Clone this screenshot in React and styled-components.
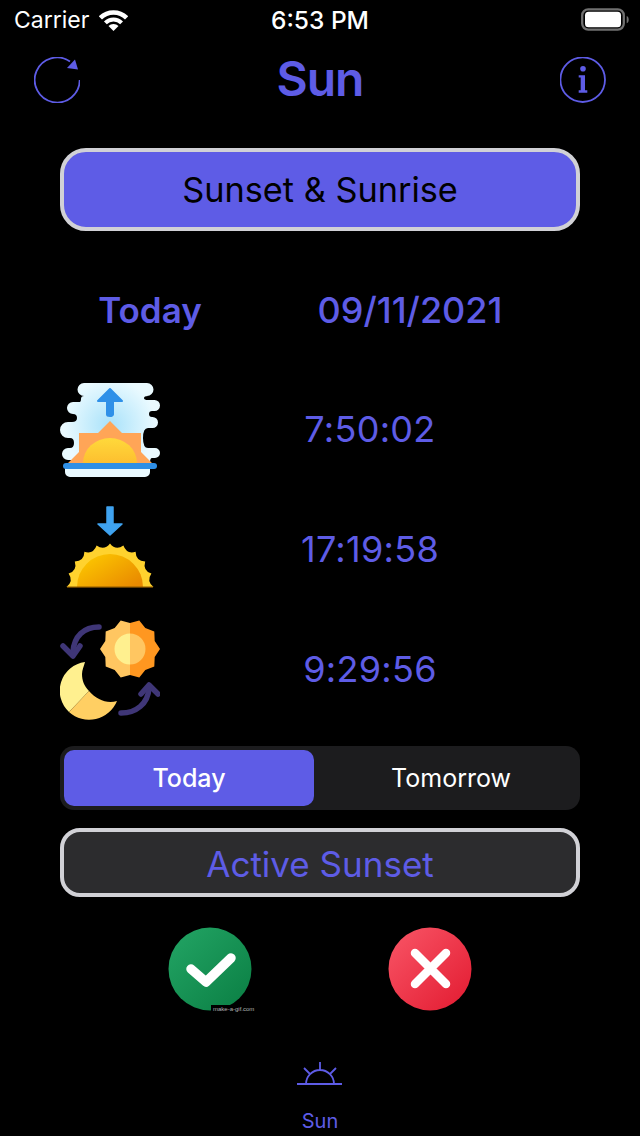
import React from "react";
import styled, { createGlobalStyle } from "styled-components";

const Global = createGlobalStyle`
  html, body { margin: 0; padding: 0; background: #000; }
  body { font-family: Inter, "Noto Sans", "Liberation Sans", sans-serif; }
`;
const ACCENT = "#5e5ce6";

const Page = styled.div`
  width: 640px; height: 1136px; background: #000; display: flex; flex-direction: column; overflow: hidden;
`;
const StatusBar = styled.div`
  height: 40px; display: grid; grid-template-columns: 1fr auto 1fr; align-items: center; padding: 0 14px; color: #fff; box-sizing: border-box;
`;
const StatusLeft = styled.div`display: flex; align-items: center; gap: 10px; font-size: 23px; font-weight: 400;`;
const StatusTime = styled.div`font-size: 24.5px; font-weight: 500;`;
const StatusRight = styled.div`display: flex; justify-content: flex-end; margin-right: -3px;`;
const StatusIcon = styled.svg`display: block;`;
const NavBar = styled.div`
  height: 80px; display: flex; align-items: center; justify-content: space-between; padding: 0 34px; box-sizing: border-box;
`;
const NavIcon = styled.svg`width: 46px; height: 46px; display: block;`;
const Title = styled.h1`margin: 0 0 2px; color: ${ACCENT}; font-size: 48px; font-weight: 600; letter-spacing: -1px; line-height: 1;`;
const Content = styled.div`display: flex; flex-direction: column; padding: 28px 60px 0;`;
const Bordered = styled.div`
  box-sizing: border-box; width: 520px; height: ${p => p.$h}px; border: 4px solid #d1d1d6; border-radius: ${p => p.$r}px;
  background: ${p => p.$bg}; color: ${p => p.$fg}; display: flex; align-items: center; justify-content: center;
  font-size: ${p => p.$size}px; font-weight: 400; padding: ${p => p.$pad};
`;
const DateRow = styled.div`
  display: grid; grid-template-columns: 180px 340px; margin-top: 59px; height: 40px; line-height: 40px; color: ${ACCENT}; font-size: 35px; font-weight: 600; text-align: center;
`;
const DateValue = styled.div`font-size: 36px; font-weight: 500;`;
const TimeRows = styled.div`display: flex; flex-direction: column; gap: 20px; margin-top: 50px;`;
const TimeRow = styled.div`display: flex; align-items: center; height: 100px;`;
const RowIcon = styled.svg`width: 100px; height: 100px; flex: none; display: block;`;
const TimeValue = styled.div`flex: 1; padding-bottom: 2px; text-align: center; color: ${ACCENT}; font-size: 36px; font-weight: 400; letter-spacing: 0.3px;`;
const Segmented = styled.div`
  margin-top: 26px; height: 64px; background: #1c1c1e; border-radius: 14px; padding: 4px; box-sizing: border-box; display: grid; grid-template-columns: 250px 250px; gap: 12px;
`;
const Segment = styled.div`
  display: flex; align-items: center; justify-content: center; border-radius: 10px; color: #fff; font-size: 25px; font-weight: ${p => (p.$active ? 500 : 400)};
  background: ${p => (p.$active ? ACCENT : "transparent")};
`;
const ActiveWrap = styled.div`margin-top: 18px;`;
const Actions = styled.div`display: flex; justify-content: center; gap: 136px; margin-top: 30px;`;
const ActionWrap = styled.div`position: relative; width: 84px; height: 84px;`;
const ActionIcon = styled.svg`width: 84px; height: 84px; display: block;`;
const Watermark = styled.span`
  position: absolute; left: 43px; top: 78px; padding-left: 2px; height: 9px; font-size: 6px; line-height: 9px; font-weight: 400; color: #b4b4b4; white-space: nowrap; font-family: "Liberation Sans", sans-serif; background: #000;
`;
const TabBar = styled.div`
  margin-top: auto; height: 104px; display: flex; flex-direction: column; align-items: center; color: ${ACCENT};
`;
const TabIcon = styled.svg`width: 46px; height: 28px; display: block; margin-top: 27px;`;
const TabLabel = styled.div`font-size: 20px; font-weight: 400; margin-top: 22px; line-height: 24px;`;

const Wifi = () => (
  <StatusIcon width="29" height="21" viewBox="0 0 29 21">
    <path fill="none" stroke="#fff" strokeWidth="4.500" d="M1.400 7.900A18.500 18.500 0 0 1 27.600 7.900" />
    <path fill="none" stroke="#fff" strokeWidth="4" d="M6.400 12.900A11.500 11.500 0 0 1 22.600 12.900" />
    <path fill="#fff" d="M14.500 21L9.500 16A7 7 0 0 1 19.500 16z" />
  </StatusIcon>
);
const Battery = () => (
  <StatusIcon width="48" height="24" viewBox="0 0 48 24">
    <rect x="1.200" y="1.400" width="41.600" height="20.200" rx="6" fill="none" stroke="#707070" strokeWidth="2.300" />
    <rect x="4" y="3.700" width="36" height="15.600" rx="3.500" fill="#fff" />
    <path d="M45.700 8c1.300.5 2 1.900 2 3.650s-.7 3.150-2 3.650z" fill="#707070" />
  </StatusIcon>
);
const Refresh = () => (
  <NavIcon viewBox="0 0 46 46">
    <path d="M45.700 23A22.500 22.500 0 1 1 36 4.500" fill="none" stroke={ACCENT} strokeWidth="1.800" />
    <path d="M41 2.500L33 11L44 12.500Z" fill={ACCENT} />
  </NavIcon>
);
const Info = () => (
  <NavIcon viewBox="0 0 46 46">
    <circle cx="22.700" cy="22.700" r="22.300" fill="none" stroke={ACCENT} strokeWidth="1.800" />
    <circle cx="23" cy="11.700" r="2.800" fill={ACCENT} />
    <path d="M18.700 18.300H25V33.300H27.300V35.700H18.700V33.300H20.700V20.500H18.700Z" fill={ACCENT} />
  </NavIcon>
);
const SunriseIcon = () => (
  <RowIcon viewBox="0 0 100 100">
    <defs>
      <radialGradient id="cloud" gradientUnits="userSpaceOnUse" cx="50" cy="45" r="46">
        <stop offset="0" stopColor="#a9e2fa" />
        <stop offset="1" stopColor="#eafaff" />
      </radialGradient>
      <linearGradient id="sr" x1="0" y1="0" x2="0" y2="1">
        <stop offset="0" stopColor="#ffd93b" />
        <stop offset="1" stopColor="#fdbf2f" />
      </linearGradient>
    </defs>
    <path
      fill="url(#cloud)"
      d="M24 3H87a6.500 6.500 0 0 1 0 13H88Q84 16 84 18Q84 20 88 20H94.500a5.500 5.500 0 0 1 0 11H92Q89 31 89 34Q89 37 92 37H92.500a5.500 5.500 0 0 1 0 11H88Q83 48 83 58Q83 68 88 68H95a5 5 0 0 1 0 10H92Q90 78 90 83V92a5 5 0 0 1-5 5H10a5 5 0 0 1-5-5V84Q12 84 12 80H8a6 6 0 0 1 0-12H10Q14 68 14 63Q14 58 10 58H8a8 8 0 0 1 0-16H12Q17 42 17 38Q17 34 13 34a6 6 0 0 1 0-12H20Q21 22 21 19Q21 16 24 16a6.500 6.500 0 0 1 0-13Z"
    />
    <path fill="#ffa557" d="M50 41L62 53H81V72L92 83H8L19 72V53H38Z" />
    <path fill="url(#sr)" d="M23 83a27 25 0 0 1 54 0z" />
    <rect x="3" y="83" width="94" height="6" rx="3" fill="#2f8fe5" />
    <path fill="#2e90e8" stroke="#2e90e8" strokeWidth="2" strokeLinejoin="round" d="M50 9L62 21H53V34.500A3 1.500 0 0 1 47 34.500V21H38Z" />
  </RowIcon>
);
const scallop = (cx, cy, tip, notch, n) => {
  const pt = (a, r) => `${(cx + r * Math.cos(a)).toFixed(1)} ${(cy + r * Math.sin(a)).toFixed(1)}`;
  let d = `M${pt(Math.PI, tip)}`;
  for (let i = 0; i < n; i++) {
    const a0 = Math.PI + (Math.PI * i) / n;
    const step = Math.PI / n;
    d += `Q${pt(a0 + step / 2, notch)} ${pt(a0 + step, tip)}`;
  }
  return d + "Z";
};
const gear = (cx, cy, r1, r2, n, start, end) => {
  const pts = [];
  const steps = n * 2;
  for (let i = 0; i <= steps; i++) {
    const a = start + ((end - start) * i) / steps;
    const r = i % 2 === 0 ? r2 : r1;
    pts.push(`${(cx + r * Math.cos(a)).toFixed(1)},${(cy + r * Math.sin(a)).toFixed(1)}`);
  }
  return pts.join(" ");
};
const SunsetIcon = () => (
  <RowIcon viewBox="0 0 100 100">
    <defs>
      <linearGradient id="ss" x1="0" y1="0" x2="1" y2="0.800">
        <stop offset="0" stopColor="#ffcf00" />
        <stop offset="1" stopColor="#e98a00" />
      </linearGradient>
    </defs>
    <path fill="#ffd22e" d={scallop(50, 87, 43.500, 36.500, 10)} />
    <path fill="url(#ss)" d="M17 87a33 33 0 0 1 66 0z" />
    <rect x="7" y="86.500" width="86" height="1.200" fill="#8a5600" />
    <path fill="#3fa3f0" stroke="#3fa3f0" strokeWidth="1.500" strokeLinejoin="round" d="M47 7H53V24H62L50 35L38 24H47Z" />
  </RowIcon>
);
const CycleIcon = () => (
  <RowIcon viewBox="0 0 100 100">
    <polygon fill="#ffc661" points={gear(70, 29, 30, 26, 5, Math.PI / 2, (3 * Math.PI) / 2)} />
    <polygon fill="#ff9720" points={gear(70, 29, 30, 26, 5, -Math.PI / 2, Math.PI / 2)} />
    <path fill="#fff08f" d="M70 13.500a15.500 15.500 0 0 0 0 31z" />
    <path fill="#ffc661" d="M70 13.500a15.500 15.500 0 0 1 0 31z" />
    <path fill="#fff08f" d="M25 42A29 29 0 0 0 9 92L29 71C24 66 22 60 22 54C22 50 24 46 25 42Z" />
    <path fill="#ffcf63" d="M9 92A30 30 0 0 0 57 81C47 84 37 80 29 71Z" />
    <g fill="none" stroke="#3f3677" strokeWidth="5.500" strokeLinecap="round" strokeLinejoin="round">
      <path d="M39 7C24 7 14 16 13 32" />
      <path d="M3 26L13 36L20 26" />
      <path d="M61 93C76 93 88 84 89 68" />
      <path d="M81 74L89 65L98 74" />
    </g>
  </RowIcon>
);
const Check = () => (
  <ActionIcon viewBox="0 0 84 84">
    <defs>
      <linearGradient id="g" x1="0" y1="0" x2="1" y2="1">
        <stop offset="0" stopColor="#23a565" />
        <stop offset="1" stopColor="#0a7e43" />
      </linearGradient>
    </defs>
    <circle cx="42" cy="42" r="41.500" fill="url(#g)" />
    <path d="M23 42L38 55L63 31" fill="none" stroke="#fff" strokeWidth="9.500" strokeLinecap="round" strokeLinejoin="round" />
  </ActionIcon>
);
const Cross = () => (
  <ActionIcon viewBox="0 0 84 84">
    <defs>
      <linearGradient id="r" x1="0" y1="0" x2="1" y2="1">
        <stop offset="0" stopColor="#f95667" />
        <stop offset="1" stopColor="#e21a30" />
      </linearGradient>
    </defs>
    <circle cx="42" cy="42" r="41.500" fill="url(#r)" />
    <path d="M27 26L58 57M58 26L27 57" fill="none" stroke="#fff" strokeWidth="8.500" strokeLinecap="round" />
  </ActionIcon>
);
const TabSun = () => (
  <TabIcon viewBox="0 0 46 28">
    <path d="M0 25H45M9 25a14 14 0 0 1 28 0M23 3v8M7 9l6 6M39 9l-6 6" fill="none" stroke={ACCENT} strokeWidth="1.800" />
  </TabIcon>
);

export default function App() {
  return (
    <Page>
      <Global />
      <StatusBar>
        <StatusLeft>Carrier<Wifi /></StatusLeft>
        <StatusTime>6:53 PM</StatusTime>
        <StatusRight><Battery /></StatusRight>
      </StatusBar>
      <NavBar>
        <Refresh />
        <Title>Sun</Title>
        <Info />
      </NavBar>
      <Content>
        <Bordered $h={83} $r={26} $size={34.300} $pad="0 0 1px" $bg={ACCENT} $fg="#000">Sunset &amp; Sunrise</Bordered>
        <DateRow>
          <div>Today</div>
          <DateValue>09/11/2021</DateValue>
        </DateRow>
        <TimeRows>
          <TimeRow><SunriseIcon /><TimeValue>7:50:02</TimeValue></TimeRow>
          <TimeRow><SunsetIcon /><TimeValue>17:19:58</TimeValue></TimeRow>
          <TimeRow><CycleIcon /><TimeValue>9:29:56</TimeValue></TimeRow>
        </TimeRows>
        <Segmented>
          <Segment $active>Today</Segment>
          <Segment>Tomorrow</Segment>
        </Segmented>
        <ActiveWrap>
          <Bordered $h={69} $r={20} $size={35} $pad="2px 0 0" $bg="#2c2c2e" $fg={ACCENT}>Active Sunset</Bordered>
        </ActiveWrap>
        <Actions>
          <ActionWrap><Check /><Watermark>make-a-gif.com</Watermark></ActionWrap>
          <ActionWrap><Cross /></ActionWrap>
        </Actions>
      </Content>
      <TabBar>
        <TabSun />
        <TabLabel>Sun</TabLabel>
      </TabBar>
    </Page>
  );
}
